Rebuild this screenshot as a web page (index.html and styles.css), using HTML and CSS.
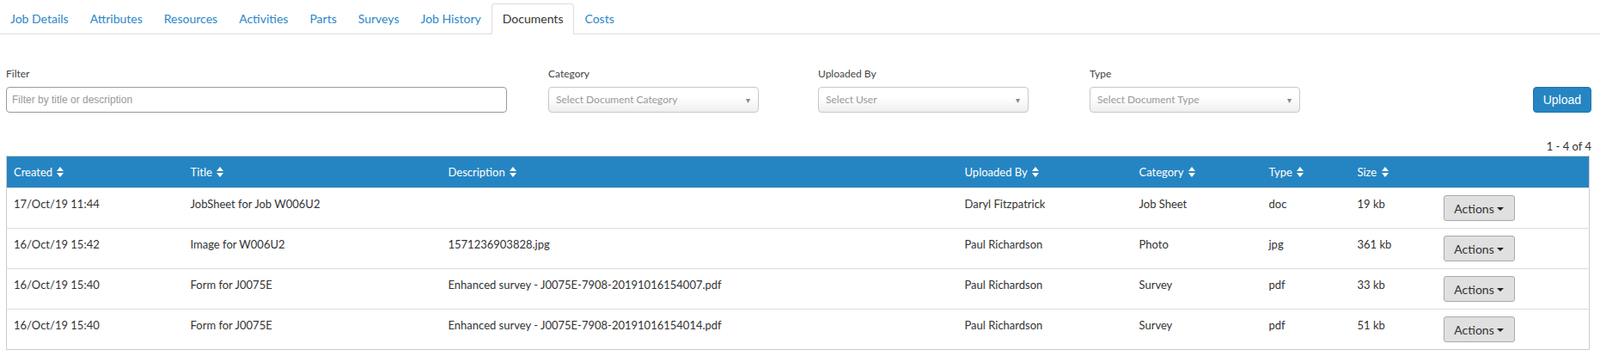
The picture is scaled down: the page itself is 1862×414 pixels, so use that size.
FILE: index.html
```html
<html>

<head>
    <title>Job - Documents</title>
    <link rel="stylesheet" href="styles.css">
</head>

<body>
    <ul class="tabs">
        <li><a href="#">Job Details</a></li>
        <li><a href="#">Attributes</a></li>
        <li><a href="#">Resources</a></li>
        <li><a href="#">Activities</a></li>
        <li><a href="#">Parts</a></li>
        <li><a href="#">Surveys</a></li>
        <li><a href="#">Job History</a></li>
        <li class="active"><a href="#">Documents</a></li>
        <li><a href="#">Costs</a></li>
    </ul>

    <div class="filters">
        <div class="field field-filter">
            <label>Filter</label>
            <input type="text" class="text-input" placeholder="Filter by title or description">
        </div>
        <div class="field field-select field-category">
            <label>Category</label>
            <div class="select">Select Document Category<span class="caret">&#9662;</span></div>
        </div>
        <div class="field field-select field-user">
            <label>Uploaded By</label>
            <div class="select">Select User<span class="caret">&#9662;</span></div>
        </div>
        <div class="field field-select">
            <label>Type</label>
            <div class="select">Select Document Type<span class="caret">&#9662;</span></div>
        </div>
        <button class="btn-upload">Upload</button>
    </div>

    <div class="count">1 - 4 of 4</div>

    <div class="table-wrap">
        <table class="docs">
            <colgroup>
                <col style="width: 206px">
                <col style="width: 300px">
                <col style="width: 601px">
                <col style="width: 203px">
                <col style="width: 151px">
                <col style="width: 103px">
                <col style="width: 100px">
                <col>
            </colgroup>
            <thead>
                <tr>
                    <th>Created <span class="sort"></span></th>
                    <th>Title <span class="sort"></span></th>
                    <th>Description <span class="sort"></span></th>
                    <th>Uploaded By <span class="sort"></span></th>
                    <th>Category <span class="sort"></span></th>
                    <th>Type <span class="sort"></span></th>
                    <th>Size <span class="sort"></span></th>
                    <th></th>
                </tr>
            </thead>
            <tbody>
                <tr>
                    <td>17/Oct/19 11:44</td>
                    <td>JobSheet for Job W006U2</td>
                    <td></td>
                    <td>Daryl Fitzpatrick</td>
                    <td>Job Sheet</td>
                    <td>doc</td>
                    <td>19 kb</td>
                    <td><button class="btn-actions">Actions<span class="btn-caret"></span></button></td>
                </tr>
                <tr>
                    <td>16/Oct/19 15:42</td>
                    <td>Image for W006U2</td>
                    <td>1571236903828.jpg</td>
                    <td>Paul Richardson</td>
                    <td>Photo</td>
                    <td>jpg</td>
                    <td>361 kb</td>
                    <td><button class="btn-actions">Actions<span class="btn-caret"></span></button></td>
                </tr>
                <tr>
                    <td>16/Oct/19 15:40</td>
                    <td>Form for J0075E</td>
                    <td>Enhanced survey - J0075E-7908-20191016154007.pdf</td>
                    <td>Paul Richardson</td>
                    <td>Survey</td>
                    <td>pdf</td>
                    <td>33 kb</td>
                    <td><button class="btn-actions">Actions<span class="btn-caret"></span></button></td>
                </tr>
                <tr>
                    <td>16/Oct/19 15:40</td>
                    <td>Form for J0075E</td>
                    <td>Enhanced survey - J0075E-7908-20191016154014.pdf</td>
                    <td>Paul Richardson</td>
                    <td>Survey</td>
                    <td>pdf</td>
                    <td>51 kb</td>
                    <td><button class="btn-actions">Actions<span class="btn-caret"></span></button></td>
                </tr>
            </tbody>
        </table>
    </div>
</body>

</html>
```

FILE: styles.css
```css
* {
    margin: 0;
    padding: 0;
    box-sizing: border-box;
}

:root {
    --blue: #2585c2;
    --link: #2a87c8;
    --border: #dddddd;
    --text: #333333;
}

body {
    font-family: Lato, "Open Sans", sans-serif;
    font-size: 14px;
    color: var(--text);
    background-color: white;
}

/* tabs */
.tabs {
    display: flex;
    list-style: none;
    padding-top: 4px;
    border-bottom: 1px solid var(--border);
}

.tabs li {
    margin-bottom: -1px;
}

.tabs a {
    display: block;
    padding: 8px 11.5px;
    line-height: 18px;
    border: 1px solid transparent;
    border-radius: 4px 4px 0 0;
    color: var(--link);
    text-decoration: none;
}

.tabs li:first-child a {
    padding-left: 11px;
}

.tabs .active a {
    color: #333;
    background-color: white;
    border-color: var(--border);
    border-bottom-color: white;
}

/* filters */
.filters {
    display: flex;
    align-items: flex-end;
    padding: 38px 10px 0 7px;
}

.field label {
    display: block;
    font-size: 12px;
    line-height: 16px;
    color: #444;
    margin-bottom: 7px;
}

.field-filter {
    width: 583px;
    margin-right: 48px;
}

.field-select {
    width: 245px;
}

.field-category {
    margin-right: 69px;
}

.field-user {
    margin-right: 71px;
}

.text-input {
    display: block;
    width: 100%;
    height: 30px;
    padding: 0 6px;
    border: 1px solid #999;
    border-radius: 4px;
    font-family: "Liberation Sans", Arial, sans-serif;
    font-size: 12px;
    color: #333;
}

.text-input::placeholder {
    color: #999;
}

.select {
    position: relative;
    height: 30px;
    line-height: 28px;
    padding: 0 8px;
    border: 1px solid #c8c8c8;
    border-radius: 4px;
    background: linear-gradient(#ffffff 40%, #eeeeee);
    font-size: 12px;
    color: #999;
}

.caret {
    position: absolute;
    right: 9px;
    top: 0;
    font-size: 10px;
    color: #888;
}

.btn-upload {
    margin-left: auto;
    height: 30px;
    padding: 0 11px;
    border: 1px solid #1f74aa;
    border-radius: 4px;
    background-color: var(--blue);
    color: white;
    font-family: "Liberation Sans", Arial, sans-serif;
    font-size: 14px;
}

.count {
    margin-top: 31px;
    margin-bottom: 3px;
    padding-right: 10px;
    text-align: right;
    font-size: 13px;
    line-height: 16px;
}

/* table */
.table-wrap {
    padding: 0 12px 0 7px;
}

.docs {
    width: 100%;
    table-layout: fixed;
    border-collapse: collapse;
    border: 1px solid #cccccc;
    font-size: 13px;
}

.docs th {
    background-color: var(--blue);
    color: white;
    font-weight: normal;
    text-align: left;
    padding: 8px 8px;
    line-height: 20px;
}

.docs td {
    padding: 8px 8px;
    line-height: 20px;
    vertical-align: top;
    border-top: 1px solid var(--border);
}

.sort {
    display: inline-block;
    width: 8px;
    height: 12px;
    margin-left: 2px;
    vertical-align: -1px;
    position: relative;
}

.sort::before,
.sort::after {
    content: "";
    position: absolute;
    left: 0;
    border-left: 4px solid transparent;
    border-right: 4px solid transparent;
}

.sort::before {
    top: 0;
    border-bottom: 5px solid white;
}

.sort::after {
    bottom: 0;
    border-top: 5px solid white;
}

.btn-actions {
    height: 30px;
    width: 83px;
    border: 1px solid #aaaaaa;
    border-radius: 3px;
    background-color: #e0e0e0;
    font-family: Lato, sans-serif;
    font-size: 14px;
    color: #333;
}

.btn-caret {
    display: inline-block;
    margin-left: 3px;
    vertical-align: 3px;
    border-left: 4px solid transparent;
    border-right: 4px solid transparent;
    border-top: 4px solid #222;
}
```
